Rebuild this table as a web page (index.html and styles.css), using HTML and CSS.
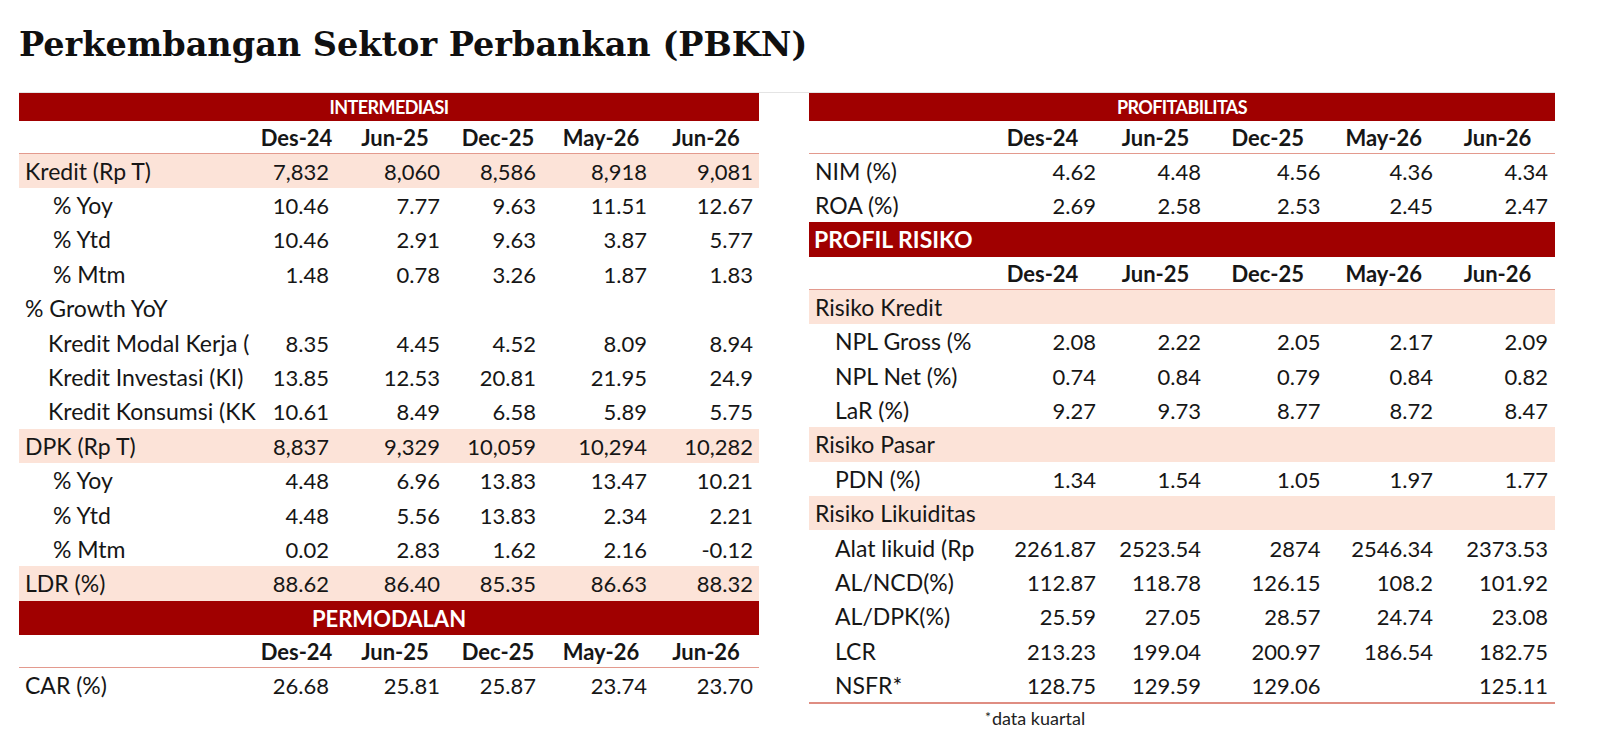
FILE: index.html
```html
<!DOCTYPE html>
<html lang="id">
<head>
<meta charset="utf-8">
<title>Perkembangan Sektor Perbankan (PBKN)</title>
<link rel="stylesheet" href="styles.css">
</head>
<body>
<div class="page">
  <h1 class="title">Perkembangan Sektor Perbankan (PBKN)</h1>
  <div class="panels">
    <div class="panel panel-left">
      <table class="tbl tbl-left">
        <colgroup>
          <col class="c-label-l"><col class="c-l1"><col class="c-l2"><col class="c-l3"><col class="c-l4"><col class="c-l5">
        </colgroup>
        <tbody>
          <tr class="bar-sm"><td colspan="6">INTERMEDIASI</td></tr>
          <tr class="hdr"><td></td><td>Des-24</td><td>Jun-25</td><td>Dec-25</td><td>May-26</td><td>Jun-26</td></tr>
          <tr class="row hl"><td class="lbl">Kredit (Rp T)</td><td>7,832</td><td>8,060</td><td>8,586</td><td>8,918</td><td>9,081</td></tr>
          <tr class="row"><td class="lbl ind2">% Yoy</td><td>10.46</td><td>7.77</td><td>9.63</td><td>11.51</td><td>12.67</td></tr>
          <tr class="row"><td class="lbl ind2">% Ytd</td><td>10.46</td><td>2.91</td><td>9.63</td><td>3.87</td><td>5.77</td></tr>
          <tr class="row"><td class="lbl ind2">% Mtm</td><td>1.48</td><td>0.78</td><td>3.26</td><td>1.87</td><td>1.83</td></tr>
          <tr class="row"><td class="lbl">% Growth YoY</td><td></td><td></td><td></td><td></td><td></td></tr>
          <tr class="row"><td class="lbl ind1">Kredit Modal Kerja (</td><td>8.35</td><td>4.45</td><td>4.52</td><td>8.09</td><td>8.94</td></tr>
          <tr class="row"><td class="lbl ind1">Kredit Investasi (KI)</td><td>13.85</td><td>12.53</td><td>20.81</td><td>21.95</td><td>24.9</td></tr>
          <tr class="row"><td class="lbl ind1">Kredit Konsumsi (KK</td><td>10.61</td><td>8.49</td><td>6.58</td><td>5.89</td><td>5.75</td></tr>
          <tr class="row hl"><td class="lbl">DPK (Rp T)</td><td>8,837</td><td>9,329</td><td>10,059</td><td>10,294</td><td>10,282</td></tr>
          <tr class="row"><td class="lbl ind2">% Yoy</td><td>4.48</td><td>6.96</td><td>13.83</td><td>13.47</td><td>10.21</td></tr>
          <tr class="row"><td class="lbl ind2">% Ytd</td><td>4.48</td><td>5.56</td><td>13.83</td><td>2.34</td><td>2.21</td></tr>
          <tr class="row"><td class="lbl ind2">% Mtm</td><td>0.02</td><td>2.83</td><td>1.62</td><td>2.16</td><td>-0.12</td></tr>
          <tr class="row hl"><td class="lbl">LDR (%)</td><td>88.62</td><td>86.40</td><td>85.35</td><td>86.63</td><td>88.32</td></tr>
          <tr class="bar-lg center"><td colspan="6">PERMODALAN</td></tr>
          <tr class="hdr"><td></td><td>Des-24</td><td>Jun-25</td><td>Dec-25</td><td>May-26</td><td>Jun-26</td></tr>
          <tr class="row"><td class="lbl">CAR (%)</td><td>26.68</td><td>25.81</td><td>25.87</td><td>23.74</td><td>23.70</td></tr>
        </tbody>
      </table>
    </div>
    <div class="panel panel-right">
      <table class="tbl tbl-right">
        <colgroup>
          <col class="c-label-r"><col class="c-r1"><col class="c-r2"><col class="c-r3"><col class="c-r4"><col class="c-r5">
        </colgroup>
        <tbody>
          <tr class="bar-sm"><td colspan="6">PROFITABILITAS</td></tr>
          <tr class="hdr"><td></td><td>Des-24</td><td>Jun-25</td><td>Dec-25</td><td>May-26</td><td>Jun-26</td></tr>
          <tr class="row"><td class="lbl">NIM (%)</td><td>4.62</td><td>4.48</td><td>4.56</td><td>4.36</td><td>4.34</td></tr>
          <tr class="row"><td class="lbl">ROA (%)</td><td>2.69</td><td>2.58</td><td>2.53</td><td>2.45</td><td>2.47</td></tr>
          <tr class="bar-lg left"><td colspan="6">PROFIL RISIKO</td></tr>
          <tr class="hdr"><td></td><td>Des-24</td><td>Jun-25</td><td>Dec-25</td><td>May-26</td><td>Jun-26</td></tr>
          <tr class="row hl"><td class="lbl">Risiko Kredit</td><td></td><td></td><td></td><td></td><td></td></tr>
          <tr class="row"><td class="lbl ind2">NPL Gross (%</td><td>2.08</td><td>2.22</td><td>2.05</td><td>2.17</td><td>2.09</td></tr>
          <tr class="row"><td class="lbl ind2">NPL Net (%)</td><td>0.74</td><td>0.84</td><td>0.79</td><td>0.84</td><td>0.82</td></tr>
          <tr class="row"><td class="lbl ind2">LaR (%)</td><td>9.27</td><td>9.73</td><td>8.77</td><td>8.72</td><td>8.47</td></tr>
          <tr class="row hl"><td class="lbl">Risiko Pasar</td><td></td><td></td><td></td><td></td><td></td></tr>
          <tr class="row"><td class="lbl ind2">PDN (%)</td><td>1.34</td><td>1.54</td><td>1.05</td><td>1.97</td><td>1.77</td></tr>
          <tr class="row hl"><td class="lbl">Risiko Likuiditas</td><td></td><td></td><td></td><td></td><td></td></tr>
          <tr class="row"><td class="lbl ind2">Alat likuid (Rp</td><td>2261.87</td><td>2523.54</td><td>2874</td><td>2546.34</td><td>2373.53</td></tr>
          <tr class="row"><td class="lbl ind2">AL/NCD(%)</td><td>112.87</td><td>118.78</td><td>126.15</td><td>108.2</td><td>101.92</td></tr>
          <tr class="row"><td class="lbl ind2">AL/DPK(%)</td><td>25.59</td><td>27.05</td><td>28.57</td><td>24.74</td><td>23.08</td></tr>
          <tr class="row"><td class="lbl ind2">LCR</td><td>213.23</td><td>199.04</td><td>200.97</td><td>186.54</td><td>182.75</td></tr>
          <tr class="row last"><td class="lbl ind2">NSFR*</td><td>128.75</td><td>129.59</td><td>129.06</td><td></td><td>125.11</td></tr>
        </tbody>
      </table>
      <div class="note"><span class="ast">*</span>data kuartal</div>
    </div>
  </div>
</div>
</body>
</html>
```

FILE: styles.css
```css
* { box-sizing: border-box; }

html, body {
  margin: 0;
  padding: 0;
  background: #ffffff;
}

body {
  font-family: Lato, "Open Sans", sans-serif;
  color: #161616;
  width: 1600px;
  height: 748px;
  overflow: hidden;
}

.page {
  padding: 0 45px 0 19px;
}

.title {
  margin: 0 0 27px 0;
  padding-top: 25px;
  height: 65px;
  font-family: "DejaVu Serif", "Liberation Serif", serif;
  font-weight: bold;
  font-size: 33.5px;
  line-height: 40px;
  letter-spacing: 0;
  color: #101010;
  white-space: nowrap;
}

.panels {
  display: flex;
  gap: 50px;
  border-top: 1px solid #e4e4e4;
}

.panel-left { width: 740px; }
.panel-right { width: 746px; }

.tbl {
  border-collapse: separate;
  border-spacing: 0;
  table-layout: fixed;
  width: 100%;
  font-size: 22px;
}

.c-label-l { width: 237px; }
.c-l1 { width: 79px; }
.c-l2 { width: 111px; }
.c-l3 { width: 96px; }
.c-l4 { width: 111px; }
.c-l5 { width: 106px; }

.c-label-r { width: 173px; }
.c-r1 { width: 121px; }
.c-r2 { width: 105px; }
.c-r3 { width: 119.5px; }
.c-r4 { width: 112.5px; }
.c-r5 { width: 115px; }

.tbl td {
  padding: 1px 6px 0 6px;
  white-space: nowrap;
  overflow: hidden;
  text-align: right;
}

.tbl-right td { padding-right: 7px; }

.bar-sm td {
  height: 27.5px;
  line-height: 26px;
  background: #a00000;
  color: #ffffff;
  font-weight: 700;
  font-size: 18px;
  letter-spacing: -0.6px;
  text-align: center;
  padding: 1px 0 0 0;
}

.bar-lg td {
  height: 34.4px;
  line-height: 33px;
  background: #a00000;
  color: #ffffff;
  font-weight: 700;
  font-size: 22px;
}

.bar-lg.center td { text-align: center; padding: 1px 0 0 0; }
.bar-lg.left td { text-align: left; padding: 1px 0 0 5px; font-size: 23px; }

.hdr td {
  height: 33px;
  line-height: 31px;
  font-weight: 700;
  text-align: center;
  padding: 1px 0 0 0;
  border-bottom: 1.5px solid #e39a8e;
}

.tbl-left .hdr td:nth-child(2) { padding-left: 2px; }
.tbl-left .hdr td:nth-child(3) { padding-left: 9px; }
.tbl-left .hdr td:nth-child(4) { padding-left: 8px; }
.tbl-left .hdr td:nth-child(5) { padding-left: 7px; }

.row td {
  height: 34.4px;
  line-height: 33px;
}

.row.hl td { background: #fce3d8; }

.row.last td { border-bottom: 2px solid #df8d82; }

.tbl td.lbl {
  text-align: left;
  text-overflow: clip;
  padding-left: 6px;
  padding-right: 0;
  font-size: 23px;
}

.tbl-left td.lbl.ind1 { padding-left: 29px; }
.tbl-left td.lbl.ind2 { padding-left: 34px; }
.tbl-right td.lbl.ind2 { padding-left: 26px; }

.note {
  padding: 3px 0 0 176px;
  font-size: 18px;
  line-height: 20px;
  color: #222;
}

.note .ast {
  font-size: 14px;
  vertical-align: 3px;
  margin-right: 1px;
}
```
